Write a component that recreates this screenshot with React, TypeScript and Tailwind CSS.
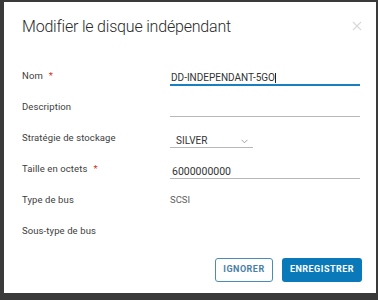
import React from "react";

const font = { fontFamily: "Roboto, 'Open Sans', sans-serif" };

function Row({ label, req, children }: { label: string; req?: boolean; children?: React.ReactNode }) {
  return (
    <div className="flex items-center h-[31px]">
      <div className="w-[148px] text-[9.5px] text-[#3d3d3d] tracking-[0.1px]">
        {label}
        {req && <span className="text-[#d0321a] ml-[6px]">*</span>}
      </div>
      <div className="flex-1">{children}</div>
    </div>
  );
}

export default function App() {
  return (
    <div className="w-[378px] h-[300px] bg-[#3a3a3a] pl-[4px] pr-[2px] pt-[2px] pb-[7px]" style={font}>
      <div className="bg-white w-full h-full relative pl-[18px] pr-[16px]">
        <div className="flex items-center justify-between h-[50px]">
          <div className="text-[16px] font-light text-[#2a2a2a] tracking-[-0.2px]">Modifier le disque indépendant</div>
          <svg width="10" height="10" viewBox="0 0 10 10" className="mr-[-2px] mb-[2px]">
            <path d="M1 1L9 9M9 1L1 9" stroke="#d8d8d8" strokeWidth="1.1" />
          </svg>
        </div>
        <div className="pt-[9px]">
          <Row label="Nom" req>
            <div className="w-[190px] mt-[5px] border-b-2 border-[#1a7fc1] text-[10px] text-[#333] pl-[1px] leading-[12px] h-[14px]">
              DD-INDEPENDANT-5GO<span className="inline-block w-[1px] h-[10px] bg-[#222] align-middle"></span>
            </div>
          </Row>
          <Row label="Description">
            <div className="w-[190px] mt-[5px] border-b border-[#b8b8b8] h-[13px]"></div>
          </Row>
          <Row label="Stratégie de stockage">
            <div className="w-[83px] mt-[5px] border-b border-[#b8b8b8] h-[13px] text-[10px] text-[#333] pl-[6px] flex items-start justify-between leading-[12px]">
              <span>SILVER</span>
              <svg width="7" height="5" viewBox="0 0 7 5" className="mr-[5px] mt-[4px]">
                <path d="M0.5 0.8L3.5 3.8L6.5 0.8" stroke="#9a9a9a" fill="none" strokeWidth="0.9" />
              </svg>
            </div>
          </Row>
          <Row label="Taille en octets" req>
            <div className="w-[190px] mt-[5px] border-b border-[#b8b8b8] h-[13px] text-[10.5px] text-[#333] pl-[2px] leading-[12px]">6000000000</div>
          </Row>
          <Row label="Type de bus">
            <div className="text-[9.5px] text-[#5e5e5e]">SCSI</div>
          </Row>
          <Row label="Sous-type de bus" />
        </div>
        <div className="absolute right-[14px] top-[256px] flex gap-[9px]">
          <button className="w-[58px] h-[24px] border border-[#4b8cb5] rounded-[3px] text-[9px] font-bold tracking-[0.5px] text-[#4a7fa5] bg-white">
            IGNORER
          </button>
          <button className="w-[80px] h-[24px] rounded-[3px] bg-[#0a79b9] text-[9px] font-bold tracking-[0.5px] text-white">
            ENREGISTRER
          </button>
        </div>
      </div>
    </div>
  );
}
